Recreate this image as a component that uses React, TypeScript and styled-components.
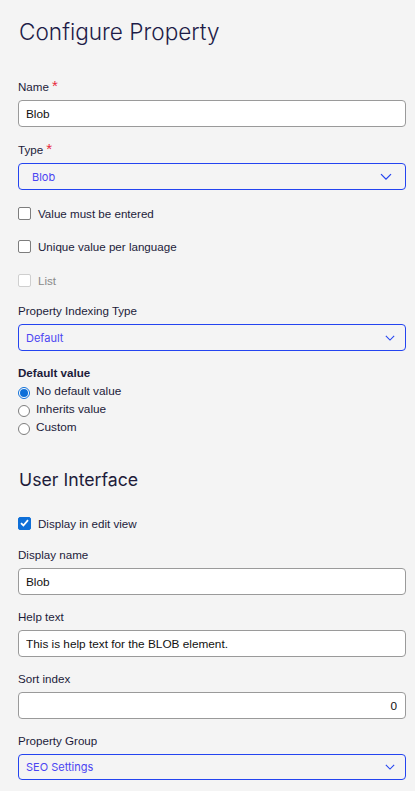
import styled, { createGlobalStyle } from "styled-components";

const GlobalStyle = createGlobalStyle`
  html, body {
    margin: 0;
    padding: 0;
    background: #f4f4f4;
  }
  body {
    font-family: "Liberation Sans", Arial, sans-serif;
    color: #1c1b3a;
  }
`;

const Page = styled.div`
  padding: 17px 9px 20px 18px;
  display: flex;
  flex-direction: column;
`;

const Title = styled.h1`
  margin: 0 0 33px 1px;
  font-family: Inter, "Noto Sans", sans-serif;
  font-size: 22.6px;
  line-height: 30px;
  font-weight: 300;
  color: #1e1c48;
`;

const SectionTitle = styled.h2`
  margin: 32px 0 21px 1px;
  font-family: Inter, "Noto Sans", sans-serif;
  font-size: 17.7px;
  line-height: 24px;
  font-weight: 400;
  color: #1e1c3a;
`;

const Field = styled.div<{ $mb?: number }>`
  display: flex;
  flex-direction: column;
  margin-bottom: ${(p) => p.$mb ?? 16}px;
`;

const Label = styled.label`
  font-size: 11.6px;
  line-height: 14px;
  margin-bottom: 6px;
  color: #1c1b3a;
  display: flex;
  align-items: flex-start;
  gap: 3px;
`;

const Required = styled.span`
  color: #e8283c;
  font-size: 15px;
  line-height: 12px;
`;

const TextInput = styled.input<{ $align?: "left" | "right" }>`
  box-sizing: border-box;
  width: 100%;
  height: 27px;
  border: 1px solid #9a9a9a;
  border-radius: 4px;
  background: #fff;
  font-family: "Liberation Sans", Arial, sans-serif;
  font-size: 11.8px;
  color: #111;
  padding: 0 8px 0 7px;
  text-align: ${(p) => p.$align ?? "left"};
  outline: none;
`;

const SelectBox = styled.div<{ $wide?: boolean; $h?: number }>`
  box-sizing: border-box;
  height: ${(p) => p.$h ?? 27}px;
  border: 1px solid #2444f0;
  border-radius: 4px;
  display: flex;
  align-items: center;
  justify-content: space-between;
  padding: 0 ${(p) => (p.$wide ? 13 : 10)}px 0 ${(p) => (p.$wide ? 13 : 7)}px;
  font-family: Inter, "Noto Sans", sans-serif;
  font-size: 11px;
  color: #4b45f2;
`;

const CheckRow = styled.div<{ $disabled?: boolean }>`
  display: flex;
  align-items: center;
  gap: 7px;
  height: 20px;
  font-size: 11.6px;
  color: ${(p) => (p.$disabled ? "#8a8a8a" : "#1c1b3a")};
`;

const CheckGroup = styled.div`
  display: flex;
  flex-direction: column;
  gap: 13.5px;
  margin: 13px 0 14px;
`;

const Box = styled.span<{ $checked?: boolean; $disabled?: boolean }>`
  box-sizing: border-box;
  width: 13px;
  height: 13px;
  border-radius: 2px;
  border: 1px solid
    ${(p) => (p.$checked ? "#0e6fd8" : p.$disabled ? "#cfcfcf" : "#7d7d7d")};
  background: ${(p) => (p.$checked ? "#0e6fd8" : "#fff")};
  display: flex;
  align-items: center;
  justify-content: center;
`;

const GroupTitle = styled.div`
  font-size: 11.6px;
  line-height: 14px;
  font-weight: 700;
  margin-top: 15px;
  margin-bottom: 2px;
`;

const RadioRow = styled.div`
  display: flex;
  align-items: center;
  gap: 6px;
  height: 18px;
  font-size: 11.8px;
`;

const Circle = styled.span<{ $checked?: boolean }>`
  box-sizing: border-box;
  width: 12px;
  height: 12px;
  margin-top: 4px;
  border-radius: 50%;
  border: 1px solid ${(p) => (p.$checked ? "#0e6fd8" : "#7d7d7d")};
  background: #fff;
  display: flex;
  align-items: center;
  justify-content: center;

  &::after {
    content: "";
    display: ${(p) => (p.$checked ? "block" : "none")};
    width: 8px;
    height: 8px;
    border-radius: 50%;
    background: #0e6fd8;
  }
`;

function Chevron({ size }: { size: number }) {
  return (
    <svg width={size} height={size * 0.6} viewBox="0 0 12 7">
      <polyline
        points="1,1 6,6 11,1"
        fill="none"
        stroke="#2444f0"
        strokeWidth="1.3"
      />
    </svg>
  );
}

function Check() {
  return (
    <svg width="9" height="8" viewBox="0 0 9 8">
      <polyline
        points="1,4.2 3.4,6.5 8,1.2"
        fill="none"
        stroke="#fff"
        strokeWidth="1.8"
      />
    </svg>
  );
}

function Checkbox({
  label,
  checked,
  disabled,
}: {
  label: string;
  checked?: boolean;
  disabled?: boolean;
}) {
  return (
    <CheckRow $disabled={disabled}>
      <Box $checked={checked} $disabled={disabled}>
        {checked && <Check />}
      </Box>
      {label}
    </CheckRow>
  );
}

function Radio({ label, checked }: { label: string; checked?: boolean }) {
  return (
    <RadioRow>
      <Circle $checked={checked} />
      {label}
    </RadioRow>
  );
}

export default function App() {
  return (
    <>
      <GlobalStyle />
      <Page>
        <Title>Configure Property</Title>

        <Field>
          <Label>
            Name <Required>*</Required>
          </Label>
          <TextInput readOnly value="Blob" />
        </Field>

        <Field $mb={0}>
          <Label>
            Type <Required>*</Required>
          </Label>
          <SelectBox $wide>
            Blob
            <Chevron size={12} />
          </SelectBox>
        </Field>

        <CheckGroup>
          <Checkbox label="Value must be entered" />
          <Checkbox label="Unique value per language" />
          <Checkbox label="List" disabled />
        </CheckGroup>

        <Field $mb={0}>
          <Label>Property Indexing Type</Label>
          <SelectBox>
            Default
            <Chevron size={10} />
          </SelectBox>
        </Field>

        <GroupTitle>Default value</GroupTitle>
        <Radio label="No default value" checked />
        <Radio label="Inherits value" />
        <Radio label="Custom" />

        <SectionTitle>User Interface</SectionTitle>

        <Field $mb={15}>
          <Checkbox label="Display in edit view" checked />
        </Field>

        <Field $mb={15}>
          <Label>Display name</Label>
          <TextInput readOnly value="Blob" />
        </Field>

        <Field $mb={15}>
          <Label>Help text</Label>
          <TextInput readOnly value="This is help text for the BLOB element." />
        </Field>

        <Field $mb={15}>
          <Label>Sort index</Label>
          <TextInput readOnly value="0" $align="right" />
        </Field>

        <Field>
          <Label>Property Group</Label>
          <SelectBox $h={26}>
            SEO Settings
            <Chevron size={10} />
          </SelectBox>
        </Field>
      </Page>
    </>
  );
}
